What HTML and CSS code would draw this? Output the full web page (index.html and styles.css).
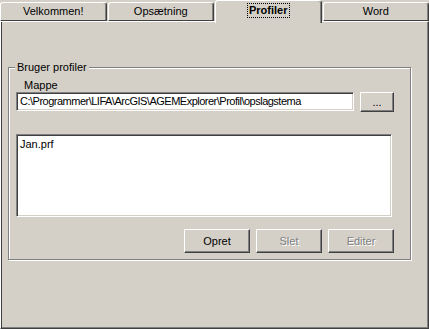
FILE: index.html
```html
<!DOCTYPE html>
<html lang="da">
<head>
  <meta charset="UTF-8">
  <title>Profiler</title>
  <link rel="stylesheet" href="styles.css">
</head>
<body>
  <div class="tabs">
    <div class="tab">Velkommen!</div>
    <div class="tab">Opsætning</div>
    <div class="tab active"><span class="focus">Profiler</span></div>
    <div class="tab">Word</div>
  </div>

  <div class="panel">
    <!-- Bruger profiler -->
    <div class="group">
      <div class="group-title">Bruger profiler</div>
      <div class="label">Mappe</div>
      <div class="path-row">
        <div class="textbox">C:\Programmer\LIFA\ArcGIS\AGEMExplorer\Profil\opslagstema</div>
        <div class="button browse">...</div>
      </div>
      <div class="listbox">
        <div class="list-item">Jan.prf</div>
      </div>
      <div class="buttons">
        <div class="button">Opret</div>
        <div class="button disabled">Slet</div>
        <div class="button disabled">Editer</div>
      </div>
    </div>
  </div>
</body>
</html>
```

FILE: styles.css
```css
body {
  margin: 0;
  background-color: #d4d0c8;
  font-family: "Liberation Sans", Arial, sans-serif;
  font-size: 11px;
  color: #000;
  width: 429px;
  height: 329px;
  overflow: hidden;
}
/* Tabs */
.tabs {
  display: flex;
  height: 21px;
}
.tab {
  box-sizing: border-box;
  width: 107px;
  height: 19px;
  margin-top: 2px;
  margin-right: 1px;
  border-top: 1px solid #fff;
  border-left: 1px solid #fff;
  border-right: 1px solid #404040;
  border-bottom: 1px solid #404040;
  border-radius: 3px 3px 0 0;
  box-shadow: inset -1px 0 0 #808080;
  display: flex;
  align-items: center;
  justify-content: center;
  line-height: 13px;
}
.tab:last-child {
  margin-right: 0;
}
.tab.active {
  position: relative;
  z-index: 1;
  height: 23px;
  margin-top: 0;
  margin-bottom: -2px;
  border-bottom: none;
  padding-bottom: 3px;
  background-color: #d4d0c8;
  font-weight: bold;
}
.focus {
  border: 1px dotted #000;
  padding: 0 1px;
}
/* Panel */
.panel {
  box-sizing: border-box;
  height: 308px;
  border-top: 1px solid #fff;
  border-left: 1px solid #fff;
  border-right: 1px solid #404040;
  border-bottom: 1px solid #404040;
  box-shadow: inset 1px 0 0 #404040, inset -1px -1px 0 #808080;
  padding: 45px 0 0 7px;
}
/* Group box */
.group {
  box-sizing: border-box;
  width: 403px;
  height: 193px;
  border: 1px solid #808080;
  box-shadow: inset 1px 1px 0 #fff, 1px 1px 0 #fff;
  padding-left: 7px;
}
.group-title {
  width: fit-content;
  margin: -7px 0 0 -1px;
  padding: 0 2px;
  line-height: 13px;
  background-color: #d4d0c8;
}
.label {
  margin: 5px 0 0 8px;
  line-height: 13px;
}
.path-row {
  display: flex;
  gap: 6px;
}
.textbox {
  box-sizing: border-box;
  width: 338px;
  height: 19px;
  background-color: #fff;
  border-top: 1px solid #808080;
  border-left: 1px solid #808080;
  border-right: 1px solid #fff;
  border-bottom: 1px solid #fff;
  box-shadow: inset 1px 1px 0 #404040, inset -1px -1px 0 #d4d0c8;
  padding: 2px 3px;
  line-height: 13px;
  letter-spacing: -0.5px;
  white-space: nowrap;
}
.listbox {
  box-sizing: border-box;
  width: 376px;
  height: 83px;
  margin-top: 22px;
  background-color: #fff;
  border-top: 1px solid #808080;
  border-left: 1px solid #808080;
  border-right: 1px solid #fff;
  border-bottom: 1px solid #fff;
  box-shadow: inset 1px 1px 0 #404040, inset -1px -1px 0 #d4d0c8;
  padding: 3px 3px;
}
.list-item {
  line-height: 13px;
}
/* Buttons */
.buttons {
  display: flex;
  gap: 6px;
  margin: 12px 0 0 168px;
}
.button {
  box-sizing: border-box;
  width: 66px;
  height: 24px;
  border-top: 1px solid #fff;
  border-left: 1px solid #fff;
  border-right: 1px solid #404040;
  border-bottom: 1px solid #404040;
  box-shadow: inset -1px -1px 0 #808080;
  display: flex;
  align-items: center;
  justify-content: center;
  line-height: 13px;
}
.button.browse {
  width: 34px;
  height: 20px;
}
.button.disabled {
  color: #808080;
  text-shadow: 1px 1px 0 #fff;
}
```
